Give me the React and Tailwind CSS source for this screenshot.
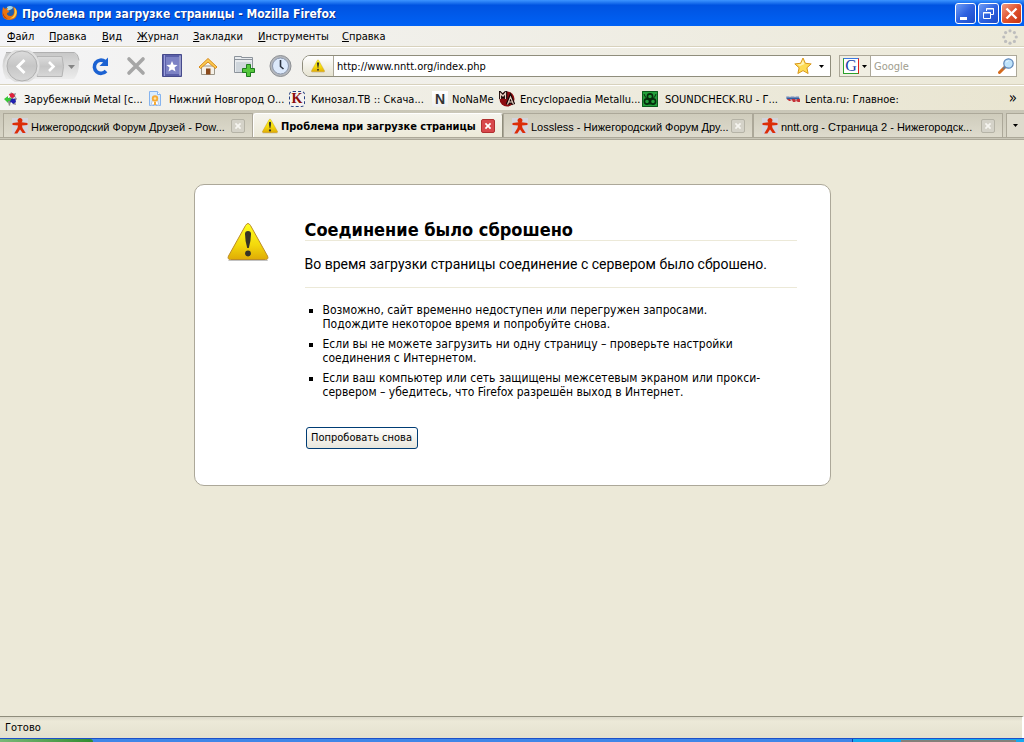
import React, { useState } from "react";

const MENUS = [
  { key: "Ф", rest: "айл", width: "w-[42px]" },
  { key: "П", rest: "равка", width: "w-[53px]" },
  { key: "В", rest: "ид", width: "w-[35px]" },
  { key: "Ж", rest: "урнал", width: "w-[56px]" },
  { key: "З", rest: "акладки", width: "w-[65px]" },
  { key: "И", rest: "нструменты", width: "w-[84px]" },
  { key: "С", rest: "правка", width: "w-[60px]" },
];

const WarningIcon = ({ className }) => (
  <svg viewBox="0 0 42 40" className={className} aria-hidden="true">
    <defs>
      <linearGradient id="warn" x1="0" y1="0" x2="0" y2="1">
        <stop offset="0" stopColor="#ffff20" />
        <stop offset="0.6" stopColor="#f3d80c" />
        <stop offset="1" stopColor="#dfab05" />
      </linearGradient>
    </defs>
    <path d="M3 38h36.500q2 0 1.500 1h-40q0-1 2-1z" fill="#999" opacity="0.6" />
    <path
      d="M18.500 3.500q2.500-4 5 0L40.500 34q1.500 3.500-2 3.500h-35q-3.500 0-2-3.500z"
      fill="url(#warn)"
      stroke="#bd8d28"
      strokeWidth="1"
    />
    <path d="M18 12q0-3 3-3t3 3q0 6-2.200 14h-1.600Q18 18 18 12z" fill="#363327" />
    <circle cx="21" cy="31.500" r="2.900" fill="#363327" />
  </svg>
);

const FirefoxIcon = () => (
  <svg viewBox="0 0 16 16" className="size-4" aria-hidden="true">
    <circle cx="8" cy="7.500" r="7" fill="#235fae" />
    <path d="M5 2q3-2 6 0 0 2-3 3L5 6z" fill="#9fd8f0" />
    <path
      d="M1 2l2 2Q4 3 6 3L5 5l2.500 1-1 1.500q-2 0-1.500 2 1 1.500 4 1.500 3-1 3-4 0-3-1-5.500 4 2 4 6 0 7-7 7.500Q.8 15 .3 9 .2 5 1 2z"
      fill="#ea7410"
    />
    <path d="M12.500 2.500q3.500 3.500 1.500 7.500-2 4-6 3.500 6-2 4.500-11z" fill="#fbd04a" />
    <path d="M.8 7q.7 5 5.200 7Q.5 13 .8 7z" fill="#a92b08" />
  </svg>
);

const PersonIcon = () => (
  <svg viewBox="0 0 16 16" className="size-4 shrink-0" aria-hidden="true">
    <path fill="#d4d4dc" d="M0 0h16v16H0z" />
    <path
      d="M8 0a2.400 2.400 0 0 1 1.500 4.300L15.500 5v2L10 7.500l.5 2.500 3.200 5h-3L8 11.500 5.300 15.500H2.200L5.500 10 6 7.500.5 7V5l6-.7A2.400 2.400 0 0 1 8 0z"
      fill="#dc2c08"
    />
  </svg>
);

const SplatIcon = () => (
  <svg viewBox="0 0 16 16" className="size-4" aria-hidden="true">
    <path d="M8 1l2 2 3-1-1 3 2 3-2 2 1 4-4-1-3 2-1-4-2-2 3-2z" fill="#8b8b8b" />
    <path d="M6 3l4-1 2 3-2 2-3-1z" fill="#e0203a" />
    <path d="M1 8l4-3v2h3v3H5v2z" fill="#37c737" />
    <path d="M8 8l4-1 1 4-3 2-3-2z" fill="#2020b0" />
    <path d="M6 4l2 3-2-1zM11 6l2 1-3 1zM8 11l2 2-3 1z" fill="#fff" />
  </svg>
);

const RibbonIcon = () => (
  <svg viewBox="0 0 16 16" className="size-4" aria-hidden="true">
    <path d="M2.500.5h8l3 3v11h-11z" fill="#d9ecfd" stroke="#86b4ee" />
    <path d="M10.500.5v3h3" fill="#fff" stroke="#86b4ee" />
    <path d="M5.500 9L4 14.500l3-1 1 1.500 1-1.500 3 1L10.500 9z" fill="#fff" stroke="#b6c8e6" />
    <circle cx="8" cy="7.500" r="3.200" fill="#f5aa35" />
    <circle cx="8" cy="7.500" r="1.300" fill="#ffe5a5" />
    <path d="M7 11h2v3H7z" fill="#f5aa35" />
  </svg>
);

const StampIcon = () => (
  <span className="flex size-4 items-center justify-center rounded-sm border border-dashed border-[#284284] bg-[#f4f2ef] font-['Liberation_Serif',serif] text-sm leading-none font-bold text-[#8b0c0c]">
    K
  </span>
);

const NonameIcon = () => (
  <span className="flex size-4 items-center justify-center bg-gradient-to-b from-white to-[#eee] font-['Liberation_Sans',sans-serif] text-sm leading-none font-bold text-[#333]">
    N
  </span>
);

const MetallumIcon = () => (
  <svg viewBox="0 0 16 16" className="size-4" aria-hidden="true">
    <circle cx="8" cy="8" r="7.500" fill="#8c0c10" />
    <path
      d="M1.500 8V2.500L4 5l2.500-3V8M8.500 13.500L11.500 6l3 7.500M9.500 11h4"
      fill="none"
      stroke="#140404"
      strokeWidth="3.500"
    />
    <path
      d="M1.500 8V2.500L4 5l2.500-3V8M8.500 13.500L11.500 6l3 7.500M9.500 11h4"
      fill="none"
      stroke="#e8cfc0"
      strokeWidth="1.200"
    />
  </svg>
);

const BiohazardIcon = () => (
  <svg viewBox="0 0 16 16" className="size-4" fill="none" aria-hidden="true">
    <path fill="#23a03a" d="M0 0h16v16H0z" />
    <path d="M.5.5h15v15H.5z" stroke="#0d5a1b" />
    <circle cx="8" cy="5.500" r="2.600" stroke="#062b0c" strokeWidth="1.600" />
    <circle cx="5" cy="10.500" r="2.600" stroke="#062b0c" strokeWidth="1.600" />
    <circle cx="11" cy="10.500" r="2.600" stroke="#062b0c" strokeWidth="1.600" />
    <path d="M2 3q1 4 4 5M14 3q-1 4-4 5M8 9v5" stroke="#062b0c" />
  </svg>
);

const LentaIcon = () => (
  <svg viewBox="0 0 16 16" className="size-4" aria-hidden="true">
    <path d="M1 5h3l1 1 1-1h3l1 1 1-1h3v2H2z" fill="#aeb9cb" />
    <path d="M1 6.500h13l1 2H2z" fill="#315da3" />
    <path d="M2 8h3l1 2 1-2h3l1 2 1-2h3v3h-2l-2-1-1 1H8L7 9l-1 1H4z" fill="#c5333a" />
  </svg>
);

const BOOKMARKS = [
  { label: "Зарубежный Metal [с...", Icon: SplatIcon, width: "w-[144px]", gap: "gap-[5px]" },
  { label: "Нижний Новгород О...", Icon: RibbonIcon, width: "w-[142px]", gap: "gap-[6px]" },
  { label: "Кинозал.ТВ :: Скача...", Icon: StampIcon, width: "w-[143px]", gap: "gap-[6px]" },
  { label: "NoNaMe", Icon: NonameIcon, width: "w-[67px]", gap: "gap-[4px]" },
  { label: "Encyclopaedia Metallu...", Icon: MetallumIcon, width: "w-[143px]", gap: "gap-[5px]" },
  { label: "SOUNDCHECK.RU - Г...", Icon: BiohazardIcon, width: "w-[143px]", gap: "gap-[7px]" },
  { label: "Lenta.ru: Главное:", Icon: LentaIcon, width: "w-[130px]", gap: "gap-[4px]" },
];

const TABS = [
  { title: "Нижегородский Форум Друзей - Pow..." },
  { title: "Проблема при загрузке страницы", warning: true },
  { title: "Lossless - Нижегородский Форум Дру..." },
  { title: "nntt.org - Страница 2 - Нижегородск..." },
];

const HINTS = [
  ["Возможно, сайт временно недоступен или перегружен запросами.", "Подождите некоторое время и попробуйте снова."],
  ["Если вы не можете загрузить ни одну страницу – проверьте настройки", "соединения с Интернетом."],
  ["Если ваш компьютер или сеть защищены межсетевым экраном или прокси-", "сервером – убедитесь, что Firefox разрешён выход в Интернет."],
];

const Caret = ({ color = "#000" }) => (
  <svg viewBox="0 0 5 3" className="h-[3px] w-[5px]" aria-hidden="true">
    <path d="M0 0h5L2.500 3z" fill={color} />
  </svg>
);

const TitleBar = () => (
  <header className="flex h-[26px] items-center bg-gradient-to-b from-[#3d95ff] via-[#0053e1] via-20% to-[#0062f5] pr-[2px] pl-[2px]">
    <FirefoxIcon />
    <h1 className="ml-1 flex-1 pt-px text-[12px] font-bold whitespace-nowrap text-white [text-shadow:1px_1px_0_#0b2f8a]">
      Проблема при загрузке страницы - Mozilla Firefox
    </h1>
    <div className="flex gap-[2px]">
      <button aria-label="Свернуть" className="size-[21px] rounded-[3px] border border-white bg-gradient-to-br from-[#6f9cf5] via-[#2f62e0] to-[#1c4bc8]">
        <svg viewBox="0 0 19 19" aria-hidden="true">
          <path fill="#fff" d="M4 13h7v3H4z" />
        </svg>
      </button>
      <button aria-label="Восстановить" className="size-[21px] rounded-[3px] border border-white bg-gradient-to-br from-[#6f9cf5] via-[#2f62e0] to-[#1c4bc8]">
        <svg viewBox="0 0 19 19" fill="none" stroke="#fff" aria-hidden="true">
          <path d="M7.500 7V4.500h7v6H12M7 5h8M4.500 8.500h7v6h-7zM4 9h8" />
        </svg>
      </button>
      <button aria-label="Закрыть" className="size-[21px] rounded-[3px] border border-white bg-gradient-to-br from-[#f09a80] via-[#e0512c] to-[#c5330f]">
        <svg viewBox="0 0 19 19" stroke="#fff" strokeWidth="2.400" aria-hidden="true">
          <path d="M4.500 4.500l10 10M14.500 4.500l-10 10" />
        </svg>
      </button>
    </div>
  </header>
);

const MenuBar = () => (
  <nav className="flex h-[21px] items-center border-b border-[#d8d2bd] bg-gradient-to-r from-[#f4f4f6] to-[#ece9d8] pt-[2px] pr-[6px] pl-[7px]">
    {MENUS.map((menu) => (
      <button key={menu.key} className={`${menu.width} shrink-0 text-left whitespace-nowrap`}>
        <span className="underline">{menu.key}</span>
        {menu.rest}
      </button>
    ))}
    <svg viewBox="0 0 16 16" className="ml-auto size-4" fill="#bdbdbd" aria-hidden="true">
      <circle cx="8" cy="1.800" r="1.600" />
      <circle cx="12.400" cy="3.600" r="1.600" />
      <circle cx="14.200" cy="8" r="1.600" />
      <circle cx="12.400" cy="12.400" r="1.600" />
      <circle cx="8" cy="14.200" r="1.600" />
      <circle cx="3.600" cy="12.400" r="1.600" />
      <circle cx="1.800" cy="8" r="1.600" />
      <circle cx="3.600" cy="3.600" r="1.600" />
    </svg>
  </nav>
);

const BackForward = () => (
  <button aria-label="Назад и вперёд" className="h-8 w-[78px]">
    <svg viewBox="0 0 78 32" aria-hidden="true">
      <defs>
        <linearGradient id="bf" x1="0" y1="0" x2="0" y2="1">
          <stop offset="0" stopColor="#c8c8c8" />
          <stop offset="1" stopColor="#ececec" />
        </linearGradient>
        <linearGradient id="disc" x1="0" y1="0" x2="0" y2="1">
          <stop offset="0" stopColor="#dcdcdc" />
          <stop offset="0.5" stopColor="#c6c6c6" />
          <stop offset="1" stopColor="#d8d8d8" />
        </linearGradient>
      </defs>
      <path d="M4 3h68q5 2 5 11t-5 15H4Q-3 16 4 3z" fill="url(#bf)" />
      <path d="M4 2.500h68q4 1 5 8" fill="none" stroke="#b0b0b0" />
      <path d="M35 6.500h25q3 10 0 20H35z" fill="url(#disc)" stroke="#b5b5b5" />
      <circle cx="20" cy="16" r="17.500" fill="#e0e0e0" />
      <circle cx="20" cy="16" r="15" fill="url(#disc)" stroke="#b0b0b0" />
      <path d="M22.500 10L16 16.500l6.500 6.500" fill="none" stroke="#fff" strokeWidth="3" />
      <path d="M47 12l4.500 4.500-4.500 4.500" fill="none" stroke="#fff" strokeWidth="2.600" />
      <path d="M66 15h7l-3.500 4z" fill="#858585" />
    </svg>
  </button>
);

const ToolButtons = () => (
  <>
    <button aria-label="Обновить" className="ml-2 size-6">
      <svg viewBox="0 0 24 24" fill="none" aria-hidden="true">
        <path d="M17 7.500A6.600 6.600 0 1 0 18 17" stroke="#1c62d2" strokeWidth="3.600" />
        <path d="M20 3.500v8.500h-8.500l3-3 2.500-2.500z" fill="#1c62d2" />
      </svg>
    </button>
    <button aria-label="Остановить" className="ml-3 size-6">
      <svg viewBox="0 0 24 24" aria-hidden="true">
        <path d="M5 5l14 14M19 5L5 19" stroke="#a6a6a6" strokeWidth="3.600" strokeLinecap="round" />
      </svg>
    </button>
    <button aria-label="Закладки" className="ml-3 size-6">
      <svg viewBox="0 0 24 24" aria-hidden="true">
        <path d="M2.500.5h19v22h-19z" fill="#5a5fa8" stroke="#464a8b" />
        <path d="M6 3h13v17H6z" fill="#7c82c4" />
        <path d="M4.500 1v21" stroke="#9a9edb" />
        <path d="M19.500 1.500h1v20h-1z" fill="#d8daf0" />
        <path d="M12 7l1.600 3.700 4 .3-3.100 2.600 1 4L12 15.500l-3.500 2.100 1-4L6.400 11l4-.3z" fill="#fff" />
      </svg>
    </button>
    <button aria-label="Домой" className="ml-3 size-6">
      <svg viewBox="0 0 24 24" aria-hidden="true">
        <path d="M5.500 12h13v8.500h-13z" fill="#f5f1e8" stroke="#9c9789" />
        <path d="M3 13l9-8.500L21 13l-1.500 1.500L12 8l-7.500 6.500z" fill="#fbcb50" stroke="#d88a1c" />
        <path d="M10 14.500h4.500v6H10z" fill="#8b4a1c" />
      </svg>
    </button>
    <button aria-label="Новая вкладка" className="ml-3 size-6">
      <svg viewBox="0 0 24 24" aria-hidden="true">
        <path d="M2.500 6V2.500h7v1h11v15h-18z" fill="#e8ebee" stroke="#8c939b" />
        <path d="M3 5.500h17" stroke="#8c939b" />
        <path d="M4 8h15v10H4z" fill="#cfd6dc" />
        <path d="M14.500 10.500h4v4h4v4h-4v4h-4v-4h-4v-4h4z" fill="#55c73d" stroke="#1e7d1e" />
      </svg>
    </button>
    <button aria-label="Журнал" className="ml-3 size-6">
      <svg viewBox="0 0 24 24" aria-hidden="true">
        <circle cx="12.500" cy="12" r="10.500" fill="#b4b7bc" stroke="#8d9094" />
        <circle cx="12.500" cy="12" r="8" fill="#dce9fb" stroke="#8b97ac" />
        <path d="M12.500 6v6.500l3 2.500" fill="none" stroke="#2b3340" strokeWidth="1.600" />
      </svg>
    </button>
  </>
);

const NavToolbar = () => {
  const [url, setUrl] = useState("http://www.nntt.org/index.php");
  const [query, setQuery] = useState("");

  return (
    <div className="flex h-[38px] items-center border-t border-b border-t-white border-b-[#d8d2bd] bg-gradient-to-r from-[#f4f4f6] to-[#ece9d8] pr-[7px] pl-[2px]">
      <BackForward />
      <ToolButtons />
      <div className="ml-[10px] flex h-[22px] flex-1 items-center overflow-hidden rounded-l-lg border border-[#8f8d7c] bg-white">
        <div className="flex h-full w-[31px] shrink-0 items-center justify-center border-r border-[#aca899] bg-gradient-to-b from-white to-[#e6e3d0]">
          <WarningIcon className="size-[14px]" />
        </div>
        <input
          aria-label="Адрес"
          value={url}
          onChange={(e) => setUrl(e.target.value)}
          className="min-w-0 flex-1 bg-transparent px-[3px] pt-[2px] outline-none"
        />
        <button aria-label="Добавить в закладки" className="size-[18px]">
          <svg viewBox="0 0 18 18" aria-hidden="true">
            <path d="M9 1l2.400 5.300 5.800.6-4.300 3.900 1.200 5.700L9 13.600l-5.100 2.900 1.200-5.700L.8 6.900l5.800-.6z" fill="#fddc55" stroke="#d9971a" />
            <path d="M9 3l1.500 4-4.500 2-2.500-1.500 3.500-.5z" fill="#fff3b0" />
          </svg>
        </button>
        <button aria-label="Показать журнал адресов" className="flex h-full w-[18px] items-center justify-center">
          <Caret />
        </button>
      </div>
      <div className="ml-2 flex h-[22px] w-[178px] shrink-0 items-center border border-[#aca899] bg-white">
        <button aria-label="Поисковая система" className="flex h-full w-[31px] shrink-0 items-center gap-[3px] border-r border-[#aca899] bg-[#f0eee2] pl-[3px]">
          <span className="flex size-4 items-center justify-center border border-t-[#3b78e0] border-r-[#e02020] border-b-[#2ca02c] border-l-[#2ca02c] bg-white font-['Liberation_Serif',serif] text-base leading-none text-[#1a3ea8]">
            G
          </span>
          <Caret />
        </button>
        <input
          aria-label="Поиск"
          placeholder="Google"
          value={query}
          onChange={(e) => setQuery(e.target.value)}
          className="min-w-0 flex-1 bg-transparent px-[3px] pt-[2px] outline-none placeholder:text-[#a09d8e]"
        />
        <button aria-label="Найти" className="mr-[2px] size-4">
          <svg viewBox="0 0 16 16" aria-hidden="true">
            <path d="M6.500 9.500L1.500 14.500" stroke="#d56a1c" strokeWidth="3" strokeLinecap="round" />
            <path d="M8 8L5 11" stroke="#6d7b8e" strokeWidth="2" />
            <circle cx="10.500" cy="5.500" r="4.700" fill="#bfe3fb" stroke="#5d86b8" strokeWidth="1.200" />
            <path d="M7.500 5q1-3 4-2.500-2 .5-4 2.500z" fill="#fff" />
          </svg>
        </button>
      </div>
    </div>
  );
};

const BookmarksBar = () => (
  <nav className="flex h-[25px] items-center border-t border-white bg-gradient-to-r from-[#f4f4f2] to-[#e9e5d1] pt-[2px] pr-[7px] pl-[3px]">
    {BOOKMARKS.map(({ label, Icon, width, gap }) => (
      <a key={label} href="#" className={`flex shrink-0 items-center whitespace-nowrap ${width} ${gap}`}>
        <Icon />
        <span className="pt-[2px]">{label}</span>
      </a>
    ))}
    <button aria-label="Другие закладки" className="ml-auto pb-[2px] text-[15px] leading-none">
      »
    </button>
  </nav>
);

const CloseIcon = () => (
  <svg viewBox="0 0 14 14" className="size-3" strokeWidth="2" aria-hidden="true">
    <path d="M4 4l6 6M10 4l-6 6" stroke="currentColor" />
  </svg>
);

const TabStrip = () => {
  const [active, setActive] = useState(1);

  return (
    <div className="flex h-[30px] items-end border-b-[3px] border-double border-[#aca899] bg-gradient-to-b from-[#c9c6b7] to-[#d9d6c7] pl-[3px]">
      {TABS.map((tab, i) => (
        <div
          key={tab.title}
          className={
            i === active
              ? "flex h-[24px] min-w-0 flex-1 items-center rounded-t-[3px] border-t border-r border-l border-t-white border-r-[#8f8d7c] border-l-white bg-gradient-to-b from-[#f6f5ee] to-[#ece9d8] pr-[7px] pl-2 font-bold"
              : "flex h-[24px] min-w-0 flex-1 items-center border-t border-r border-l border-t-[#aca899] border-r-[#aca899] border-l-[#aca899] bg-gradient-to-b from-[#cfccbc] to-[#dedbcd] pr-[7px] pl-2 font-['Liberation_Sans',sans-serif]"
          }
        >
          <button onClick={() => setActive(i)} className="flex min-w-0 flex-1 items-center gap-[3px] whitespace-nowrap">
            {tab.warning ? <WarningIcon className="size-4 shrink-0" /> : <PersonIcon />}
            <span className="pt-[2px]">{tab.title}</span>
          </button>
          <button
            aria-label="Закрыть вкладку"
            className={
              i === active
                ? "flex size-[14px] shrink-0 items-center justify-center rounded-[2px] border border-[#b03030] bg-[#d8484c] text-white"
                : "flex size-[14px] shrink-0 items-center justify-center rounded-[2px] border border-[#b5b3a6] bg-[#d4d2c8] text-[#f6f5f0]"
            }
          >
            <CloseIcon />
          </button>
        </div>
      ))}
      <button aria-label="Список вкладок" className="ml-[3px] flex h-[24px] w-[18px] shrink-0 items-center justify-center border-t border-l border-[#aca899] bg-[#dedbcd]">
        <Caret />
      </button>
    </div>
  );
};

const ErrorPage = () => (
  <main className="flex-1 bg-[#ece9d8] px-4 pt-[44px]">
    <section className="mx-auto flex max-w-[637px] gap-9 rounded-[10px] border border-[#aca899] bg-white pt-[35px] pr-[33px] pb-9 pl-8">
      <WarningIcon className="mt-[2px] h-10 w-[42px] shrink-0" />
      <div className="min-w-0 flex-1">
        <h2 className="border-b border-[#ece9d8] text-lg leading-5 font-bold">
          Соединение было сброшено
        </h2>
        <p className="border-b border-[#ece9d8] pt-[13px] pb-[13px] font-['Roboto',sans-serif] text-[14px] leading-5">
          Во время загрузки страницы соединение с сервером было сброшено.
        </p>
        <ul className="mt-[15px] flex list-[square] flex-col gap-[6px] pl-[18px] text-[12px] leading-[14px]">
          {HINTS.map(([first, second]) => (
            <li key={first}>
              {first}
              <br />
              {second}
            </li>
          ))}
        </ul>
        <button className="mt-7 ml-px h-[22px] w-[112px] rounded-[3px] border border-[#003c74] bg-gradient-to-b from-white to-[#e8e6dc] whitespace-nowrap">
          Попробовать снова
        </button>
      </div>
    </section>
  </main>
);

const Taskbar = () => (
  <div className="flex h-1 border-t border-[#1c50c8] bg-[#3f86e8]">
    <div className="w-[93px] rounded-tr-sm bg-gradient-to-r from-[#79b878] to-[#2f8c2f]" />
    <div className="ml-auto flex w-[172px] border-l border-[#0b3fa8] bg-[#14a8f0]">
      <div className="ml-12 mt-px w-[115px] bg-[#84807a]" />
    </div>
  </div>
);

export default function App() {
  return (
    <div className="flex min-h-screen flex-col bg-[#ece9d8] font-['DejaVu_Sans_Condensed','Noto_Sans',sans-serif] text-[11px] leading-[14px] text-black">
      <TitleBar />
      <MenuBar />
      <NavToolbar />
      <BookmarksBar />
      <TabStrip />
      <ErrorPage />
      <footer className="flex h-[22px] items-center border-t border-r-2 border-t-[#8f8d7c] border-r-white bg-gradient-to-b from-[#dcd9ca] via-[#ece9d8] via-20% to-[#e4e1cf] pl-[5px]">
        Готово
      </footer>
      <Taskbar />
    </div>
  );
}
